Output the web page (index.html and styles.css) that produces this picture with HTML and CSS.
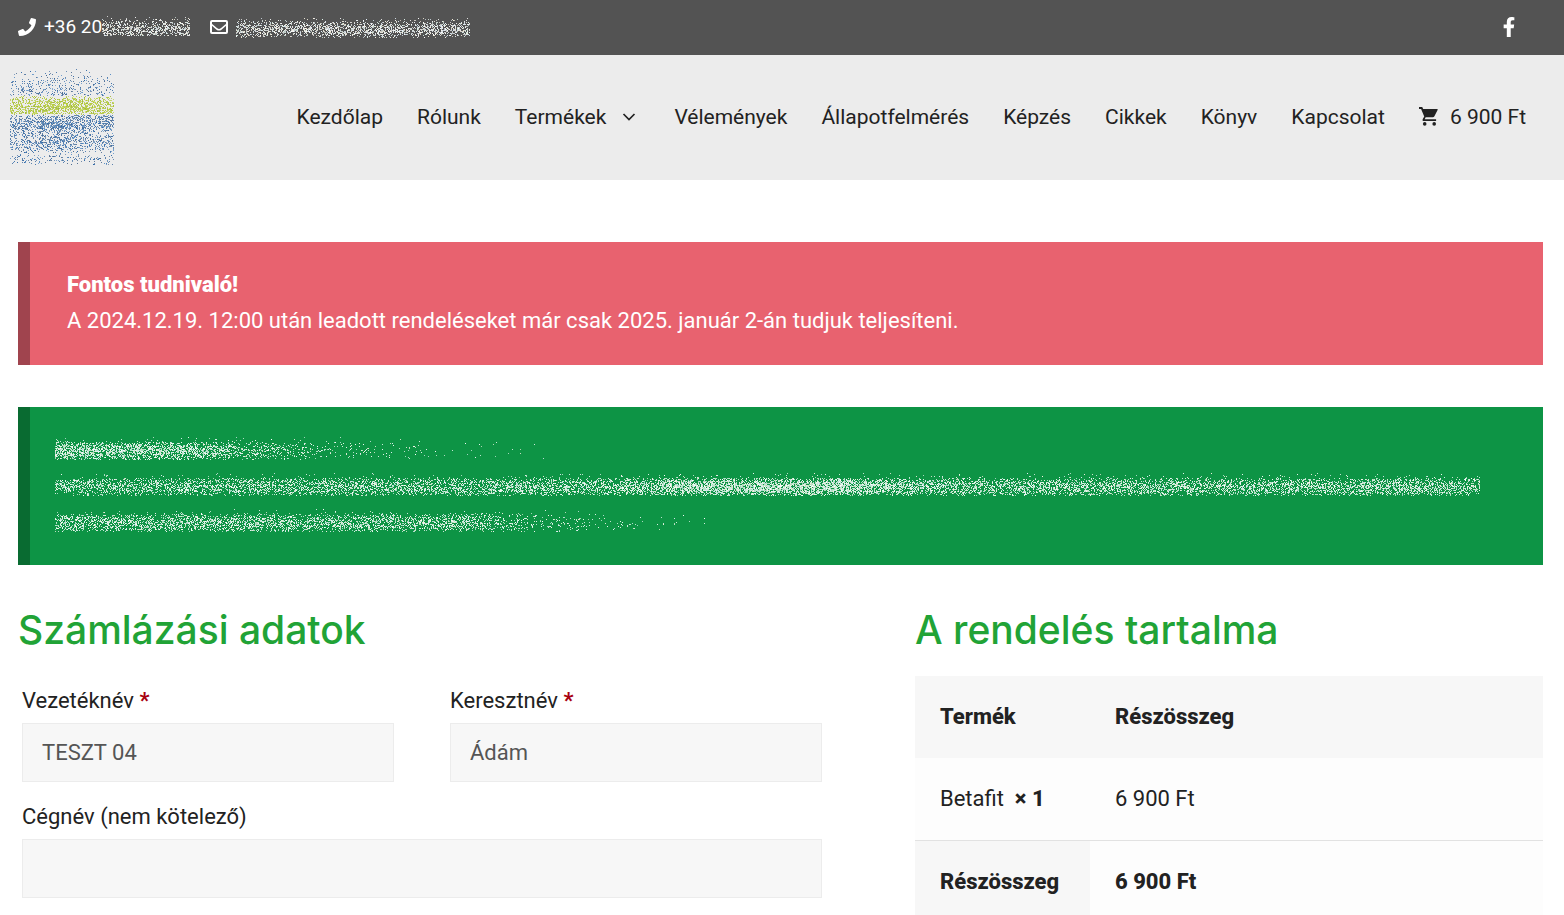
FILE: index.html
```
<!DOCTYPE html>
<html lang="hu">
<head>
<meta charset="utf-8">
<meta name="viewport" content="width=device-width, initial-scale=1">
<title>Pénztár</title>
<link rel="stylesheet" href="styles.css">
</head>
<body>
<div class="topbar">
  <a class="contact" href="#tel">
    <svg class="icon-phone" viewBox="0 0 512 512" aria-hidden="true"><path fill="currentColor" d="M493 25 389 1c-11-3-23 3-27 14l-48 112c-4 10-1 21 7 28l61 50c-36 76-98 139-177 177l-50-61c-7-8-18-11-28-7L15 362c-11 5-17 16-14 28l24 104c3 11 12 18 24 18 256 0 463-207 463-463 0-11-8-21-19-24z"/></svg>
    <span class="phone">+36 20<canvas class="spray" data-spray="phone" width="88" height="28"></canvas></span>
  </a>
  <a class="contact mail" href="#mail">
    <svg class="icon-mail" viewBox="0 0 18 14" aria-hidden="true"><rect x="1" y="1" width="16" height="12" rx="1" fill="none" stroke="currentColor" stroke-width="2"/><path d="M1 4l6 5q2 1.500 4 0l6-5" fill="none" stroke="currentColor" stroke-width="1.600"/></svg>
    <canvas class="spray" data-spray="mail" width="234" height="28"></canvas>
  </a>
  <a class="facebook" href="#facebook" aria-label="Facebook">
    <svg viewBox="0 0 320 512" aria-hidden="true"><path fill="currentColor" d="M279 288l14-93h-89v-60c0-25 13-50 53-50h40V7s-37-7-72-7c-73 0-121 44-121 125v70H23v93h81v224h100V288z"/></svg>
  </a>
</div>

<header class="header">
  <a class="logo" href="#home" aria-label="Kezdőlap"><canvas class="spray" data-spray="logo" width="104" height="106"></canvas></a>
  <nav class="nav">
    <a href="#home">Kezdőlap</a>
    <a href="#rolunk">Rólunk</a>
    <a class="has-menu" href="#termekek">Termékek <svg class="chevron" viewBox="0 0 14 8" aria-hidden="true"><path d="M1.500 1l5.500 5.500L12.500 1" fill="none" stroke="currentColor" stroke-width="1.700"/></svg></a>
    <a href="#velemenyek">Vélemények</a>
    <a href="#felmeres">Állapotfelmérés</a>
    <a href="#kepzes">Képzés</a>
    <a href="#cikkek">Cikkek</a>
    <a href="#konyv">Könyv</a>
    <a href="#kapcsolat">Kapcsolat</a>
    <a class="cart" href="#kosar"><svg class="icon-cart" viewBox="0 0 20 20" aria-hidden="true"><path fill="currentColor" d="M0 0h3.400l1 2H19q1 0 .700 1l-3.500 6.800q-.500 1-1.700 1H7l-1 2h12v2H5.500q-2.500 0-1.500-2.300l1.500-2.500L2.200 2H0z"/><circle cx="6" cy="17.800" r="1.900" fill="currentColor"/><circle cx="16" cy="17.800" r="1.900" fill="currentColor"/></svg>6 900 Ft</a>
  </nav>
</header>

<main class="page">
  <section class="notice notice-red">
    <strong>Fontos tudnivaló!</strong>
    <p>A 2024.12.19. 12:00 után leadott rendeléseket már csak 2025. január 2-án tudjuk teljesíteni.</p>
  </section>
  <section class="notice notice-green">
    <canvas class="spray" data-spray="line1" width="490" height="36"></canvas>
    <canvas class="spray" data-spray="line2" width="1425" height="36"></canvas>
    <canvas class="spray" data-spray="line3" width="650" height="36"></canvas>
  </section>

  <div class="checkout">
    <form class="billing">
      <h3>Számlázási adatok</h3>
      <div class="fields">
        <div class="field">
          <label for="last">Vezetéknév <span class="required">*</span></label>
          <input id="last" type="text" value="TESZT 04">
        </div>
        <div class="field">
          <label for="first">Keresztnév <span class="required">*</span></label>
          <input id="first" type="text" value="Ádám">
        </div>
        <div class="field wide">
          <label for="company">Cégnév (nem kötelező)</label>
          <input id="company" type="text">
        </div>
      </div>
    </form>
    <section class="order">
      <h3>A rendelés tartalma</h3>
      <table>
        <thead><tr><th>Termék</th><th>Részösszeg</th></tr></thead>
        <tbody><tr><td>Betafit&nbsp; <strong>×&nbsp;1</strong></td><td>6 900 Ft</td></tr></tbody>
        <tfoot><tr><th>Részösszeg</th><td><strong>6 900 Ft</strong></td></tr></tfoot>
      </table>
    </section>
  </div>
</main>
<script src="spray.js"></script>
</body>
</html>
```
FILE: styles.css
```
* { box-sizing: border-box; }

body {
  margin: 0;
  overflow: hidden;
  background: #fff;
  color: #222;
  font-family: Roboto, "Open Sans", sans-serif;
  font-size: 22px;
  line-height: 36px;
}

a { color: inherit; text-decoration: none; }

svg, canvas { display: block; flex: none; }

.topbar {
  display: flex;
  align-items: center;
  height: 55px;
  padding: 0 48px 1px 18px;
  background: #535353;
  color: #fff;
  font-size: 19px;
}

.contact { display: flex; align-items: center; gap: 8px; }
.phone { display: flex; align-items: center; }
.mail { margin-left: 20px; }
.icon-phone { width: 18px; height: 18px; }
.icon-mail { width: 18px; height: 14px; }
.facebook { margin-left: auto; }
.facebook svg { width: 14px; height: 20px; }

.header {
  display: flex;
  align-items: center;
  justify-content: space-between;
  height: 125px;
  padding: 0 38px 2px 10px;
  background: #ececec;
}

.nav { display: flex; align-items: center; gap: 34px; font-size: 21px; white-space: nowrap; }
.has-menu, .cart { display: flex; align-items: center; }
.has-menu { gap: 16px; padding-right: 4px; }
.cart { gap: 12px; }
.chevron { width: 14px; height: 8px; }
.icon-cart { width: 19px; height: 19px; }

.page { padding: 62px 21px 0 18px; }

.notice { margin-bottom: 42px; overflow: hidden; color: #fff; }
.notice p { margin: 0; }
.notice strong { font-weight: 900; }
.notice-red {
  padding: 25px 37px 26px;
  border-left: 12px solid #a0444e;
  background: #e8626f;
}
.notice-green {
  padding: 25px;
  border-left: 12px solid #096b31;
  background: #0d9445;
}

.checkout { display: grid; grid-template-columns: 202fr 157fr; gap: 89px; }

h3 {
  margin: 0 0 24px;
  color: #21a336;
  font-family: Inter, "Open Sans", sans-serif;
  font-size: 39px;
  font-weight: 500;
  line-height: 45px;
}

.fields {
  display: grid;
  grid-template-columns: 1fr 1fr;
  column-gap: 56px;
  row-gap: 17px;
  padding: 7px 4px 0;
}
.field { display: flex; flex-direction: column; gap: 4px; }
.wide { grid-column: 1 / -1; }
.required { color: #a80010; font-weight: 700; }

input {
  width: 100%;
  height: 59px;
  padding: 0 19px;
  border: 1px solid #ececec;
  border-radius: 0;
  background: #f7f7f7;
  color: #555;
  font: inherit;
}

table { width: 100%; border-collapse: collapse; background: #fdfdfd; }
th, td { padding: 23px 25px; text-align: left; }
th, td strong { font-weight: 800; }
th { background: #f7f7f7; }
th:first-child { width: 175px; }
tfoot tr { border-top: 1px solid #e2e2e2; }
```
FILE: spray.js
```
// Fills each canvas with seeded single-pixel speckle.
let seed = 7331;
function random() {
  seed = (seed * 1664525 + 1013904223) % 4294967296;
  return seed / 4294967296;
}

// Linear interpolation through [position, value] stops.
function ramp(stops, at) {
  for (let i = 1; i < stops.length; i++) {
    const [x0, v0] = stops[i - 1];
    const [x1, v1] = stops[i];
    if (at <= x1) return v0 + (v1 - v0) * Math.max(0, at - x0) / (x1 - x0);
  }
  return stops[stops.length - 1][1];
}

const lineRows = [[4, 0], [9, .1], [11, .5], [17, 1], [22, .9], [26, .5], [28, 0]];
const whites = ["#fff", "#e4f7ee", "#fbf5e4", "#e4f0fa", "#fff"];
const blues = ["#2c66a6", "#4a74a6", "#44658c", "#5a8fc6"];
const limes = ["#b0c82c", "#bed24c", "#9fb834"];

const sprays = {
  phone: { rows: [[2, 0], [6, .15], [9, .5], [15, .85], [22, .6], [23, 0]], cols: [[0, .65], [88, .6]], colors: () => whites },
  mail: { rows: [[4, 0], [8, .25], [13, .85], [18, .9], [23, .3], [25, 0]], cols: [[0, .6], [234, .6]], colors: () => whites },
  line1: { rows: lineRows, cols: [[0, .65], [130, .62], [200, .32], [290, .08], [390, .025], [490, .005]], colors: () => whites },
  line2: { rows: lineRows, cols: [[0, .42], [560, .5], [640, .75], [800, .75], [880, .5], [1425, .48]], colors: () => whites },
  line3: { rows: lineRows, cols: [[0, .48], [400, .48], [440, .3], [500, .13], [580, .03], [650, .005]], colors: () => whites },
  logo: {
    rows: [[3, 0], [10, .05], [18, .16], [28, .25], [32, .15], [35, .45], [43, .7], [49, .5], [50, .15], [52, .45], [61, .6], [70, .22], [76, .4], [83, .38], [89, .06], [95, .22], [100, .06], [101, 0]],
    cols: [[0, .8], [45, 1.100], [105, .8]],
    colors: y => (y > 31 && y < 51 ? limes : blues)
  }
};

for (const canvas of document.querySelectorAll("canvas")) {
  const spray = sprays[canvas.dataset.spray];
  const pen = canvas.getContext("2d");
  for (let y = 0; y < canvas.height; y++) {
    const rowDensity = ramp(spray.rows, y);
    for (let x = 0; x < canvas.width; x++) {
      if (random() > rowDensity * ramp(spray.cols, x)) continue;
      const colors = spray.colors(y);
      pen.globalAlpha = .65 + random() * .35;
      pen.fillStyle = colors[Math.floor(random() * colors.length)];
      pen.fillRect(x, y, 1, 1);
    }
  }
}
```
